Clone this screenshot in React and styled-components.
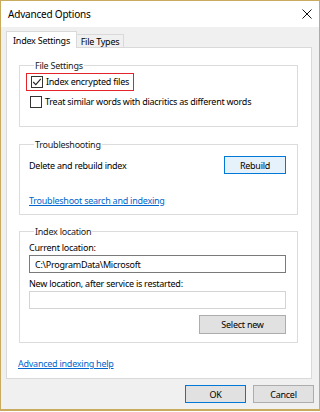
import React from "react";
import styled, { createGlobalStyle } from "styled-components";

const GlobalStyle = createGlobalStyle`
  body {
    margin: 0;
    background: #ffffff;
    font-family: "Noto Sans", "Open Sans", sans-serif;
  }
`;

const Window = styled.div`
  box-sizing: border-box;
  width: 320px;
  height: 411px;
  border: 1px solid #c9ab5e;
  border-bottom-width: 2px;
  display: flex;
  flex-direction: column;
  background: #f0f0f0;
  font-size: 9px;
  letter-spacing: -0.25px;
  color: #000;
`;

const TitleBar = styled.div`
  height: 26px;
  flex: none;
  background: #ffffff;
  display: flex;
  align-items: center;
  justify-content: space-between;
  padding: 0 7px 0 7px;
  font-size: 10px;
  letter-spacing: -0.2px;
`;

const Body = styled.div`
  flex: 1;
  display: flex;
  flex-direction: column;
  padding: 5px 7px 0 5px;
`;

const TabStrip = styled.div`
  display: flex;
  align-items: flex-end;
  height: 16px;
  margin-bottom: -1px;
  position: relative;
  z-index: 1;
`;

const Tab = styled.div`
  box-sizing: border-box;
  width: ${(p) => p.width};
  height: ${(p) => (p.active ? "17px" : "14px")};
  padding: ${(p) => (p.active ? "2px 0 0 0" : "0")};
  display: flex;
  justify-content: center;
  align-items: ${(p) => (p.active ? "flex-start" : "center")};
  background: ${(p) => (p.active ? "#ffffff" : "#f0f0f0")};
  border: 1px solid #d9d9d9;
  border-bottom: ${(p) => (p.active ? "none" : "1px solid #d9d9d9")};
  border-left-width: ${(p) => (p.active ? "1px" : "0")};
  white-space: nowrap;
`;

const Panel = styled.div`
  box-sizing: border-box;
  height: 332px;
  background: #ffffff;
  border: 1px solid #d9d9d9;
  padding: 11px 13px 0 12px;
  display: flex;
  flex-direction: column;
`;

const Group = styled.fieldset`
  margin: ${(p) => p.top || "0"} 0 0 0;
  padding: 0 11px ${(p) => p.bottom || "8px"} 9px;
  border: 1px solid #dcdcdc;
  min-width: 0;
  display: flex;
  flex-direction: column;
`;

const Legend = styled.legend`
  padding: 0 1px;
  margin-left: 5px;
  line-height: 13px;
  color: #1a1a1a;
`;

const Highlight = styled.div`
  align-self: flex-start;
  display: flex;
  align-items: center;
  margin: 1px 0 0 -3px;
  padding: 1px 4px 2px 3px;
  border: 1px solid #e3242b;
`;

const CheckRow = styled.label`
  display: flex;
  align-items: center;
  gap: 3px;
  margin: ${(p) => p.margin || "0"};
  line-height: 13px;
  white-space: nowrap;
`;

const Box = styled.span`
  box-sizing: border-box;
  width: 12px;
  height: 12px;
  flex: none;
  margin-left: 1px;
  border: 1px solid #333333;
  background: #ffffff;
  display: flex;
  align-items: center;
  justify-content: center;
`;

const Row = styled.div`
  display: flex;
  align-items: center;
  justify-content: space-between;
  margin-top: ${(p) => p.top || "0"};
`;

const Text = styled.div`
  line-height: 13px;
  margin-top: ${(p) => p.top || "0"};
  white-space: nowrap;
`;

const Link = styled.a`
  align-self: flex-start;
  line-height: 13px;
  color: #0066cc;
  text-decoration: underline;
  margin-top: ${(p) => p.top || "0"};
  margin-left: ${(p) => p.left || "0"};
  white-space: nowrap;
`;

const Button = styled.div`
  box-sizing: border-box;
  width: ${(p) => p.width};
  height: ${(p) => p.height || "18px"};
  display: flex;
  align-items: center;
  justify-content: center;
  background: ${(p) => (p.primary ? "#e5f1fb" : "#e1e1e1")};
  border: 1px solid ${(p) => (p.focused ? "#0078d7" : "#adadad")};
  align-self: ${(p) => (p.end ? "flex-end" : "auto")};
  margin-top: ${(p) => p.top || "0"};
`;

const Input = styled.div`
  box-sizing: border-box;
  height: 18px;
  margin-top: 1px;
  border: 1px solid ${(p) => (p.disabled ? "#d4d4d4" : "#7a7a7a")};
  background: #ffffff;
  padding: 0 5px;
  display: flex;
  align-items: center;
`;

const Footer = styled.div`
  display: flex;
  justify-content: flex-end;
  gap: 7px;
  padding: 6px 0 0 0;
  margin-right: -2px;
`;

const CheckMark = () => (
  <svg width="10" height="10" viewBox="0 0 10 10">
    <path d="M1.2 5 L3.8 7.6 L8.8 1.8" fill="none" stroke="#222" strokeWidth="1.1" />
  </svg>
);

const CloseIcon = () => (
  <svg width="10" height="10" viewBox="0 0 10 10">
    <path d="M0.5 0.5 L9.5 9.5 M9.5 0.5 L0.5 9.5" stroke="#111" strokeWidth="1" />
  </svg>
);

export default function App() {
  return (
    <>
      <GlobalStyle />
      <Window>
        <TitleBar>
          <span>Advanced Options</span>
          <CloseIcon />
        </TitleBar>
        <Body>
          <TabStrip>
            <Tab active width="71px">
              Index Settings
            </Tab>
            <Tab width="47px">File Types</Tab>
          </TabStrip>
          <Panel>
            <Group bottom="18px">
              <Legend>File Settings</Legend>
              <Highlight>
                <CheckRow>
                  <Box>
                    <CheckMark />
                  </Box>
                  Index encrypted files
                </CheckRow>
              </Highlight>
              <CheckRow margin="4px 0 0 0">
                <Box />
                Treat similar words with diacritics as different words
              </CheckRow>
            </Group>

            <Group top="11px" bottom="7px">
              <Legend>Troubleshooting</Legend>
              <Row top="5px">
                <Text>Delete and rebuild index</Text>
                <Button width="62px" primary focused>
                  Rebuild
                </Button>
              </Row>
              <Link top="20px">Troubleshoot search and indexing</Link>
            </Group>

            <Group top="10px" bottom="8px">
              <Legend>Index location</Legend>
              <Text top="3px">Current location:</Text>
              <Input>C:\ProgramData\Microsoft</Input>
              <Text top="4px">New location, after service is restarted:</Text>
              <Input disabled />
              <Button width="87px" height="19px" end top="6px">
                Select new
              </Button>
            </Group>

            <Link top="14px" left="-1px">
              Advanced indexing help
            </Link>
          </Panel>
          <Footer>
            <Button width="61px" focused>
              OK
            </Button>
            <Button width="61px">Cancel</Button>
          </Footer>
        </Body>
      </Window>
    </>
  );
}
